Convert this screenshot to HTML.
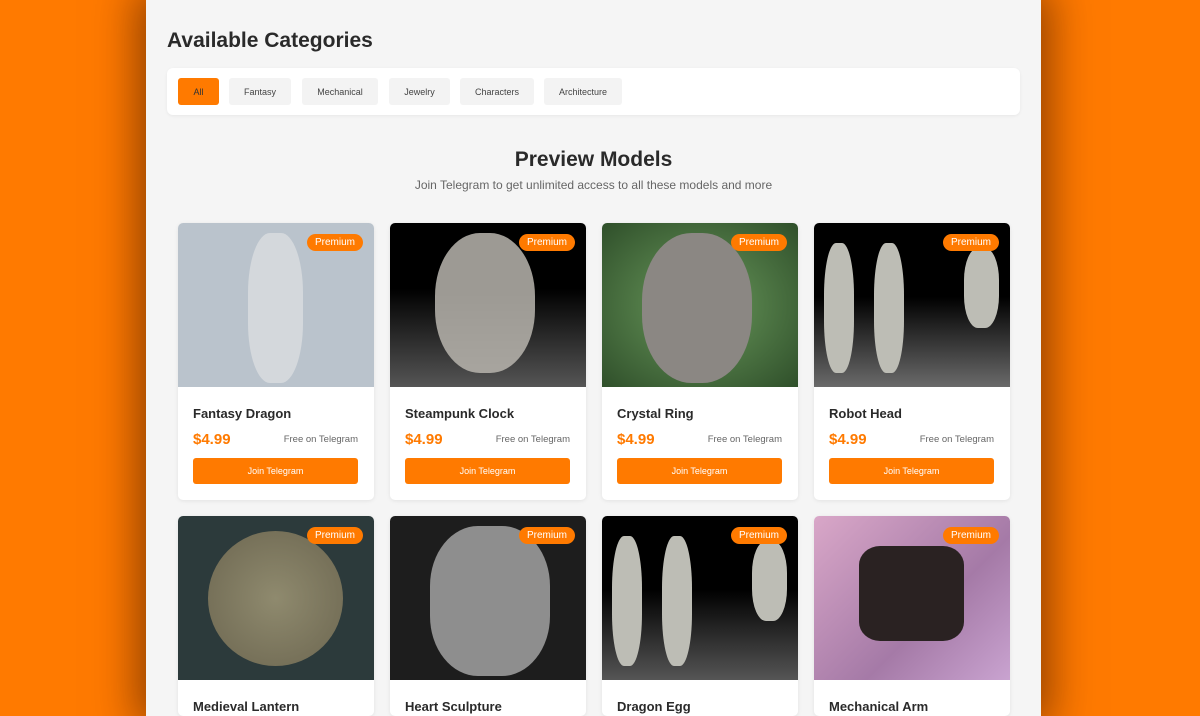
<!DOCTYPE html>
<html><head><meta charset="utf-8"><style>
*{margin:0;padding:0;box-sizing:border-box}
body{width:1200px;height:716px;overflow:hidden;background:#ff7a00;font-family:"Liberation Sans",sans-serif;position:relative}
.panel{position:absolute;left:146px;top:0;width:895px;height:716px;background:#f5f5f5;box-shadow:0 0 40px 10px rgba(60,20,0,.55);overflow:hidden}
h1{position:absolute;left:21px;top:29px;font-size:21px;font-weight:700;color:#2a2a2a}
.bar{position:absolute;left:21px;top:68px;width:853px;height:47px;background:#fff;border-radius:6px;box-shadow:0 1px 3px rgba(0,0,0,.06)}
.cat{position:absolute;top:10px;height:27px;background:#f3f3f3;border-radius:3px;font-size:9px;color:#444;display:flex;align-items:center;justify-content:center}
.cat.a{background:#ff7a00;color:#333}
h2{position:absolute;left:0;width:895px;text-align:center;top:148px;font-size:21px;font-weight:700;color:#2a2a2a}
.sub{position:absolute;left:0;width:895px;text-align:center;top:178px;font-size:12px;color:#666}
.card{position:absolute;width:196px;height:277px;background:#fff;border-radius:5px;overflow:hidden;box-shadow:0 1px 4px rgba(0,0,0,.08)}
.card.s{height:200px}
.img{height:164px;position:relative;overflow:hidden}
.badge{position:absolute;right:11px;top:11px;background:#ff7a00;color:#fff;font-size:10px;padding:3px 8px;border-radius:9px}
.t{position:absolute;left:15px;top:183px;font-size:13px;font-weight:700;color:#2a2a2a}
.p{position:absolute;left:15px;top:208px;font-size:15px;font-weight:700;color:#ff7a00}
.f{position:absolute;right:16px;top:211px;font-size:9.5px;color:#666}
.btn{position:absolute;left:15px;top:235px;width:165px;height:26px;background:#ff7a00;border-radius:3px;color:#fff;font-size:9px;display:flex;align-items:center;justify-content:center}
.blob{position:absolute;border-radius:50%}
</style></head><body>
<div class="panel">
<h1>Available Categories</h1>
<div class="bar">
<div class="cat a" style="left:11px;width:41px">All</div>
<div class="cat" style="left:62px;width:62px">Fantasy</div>
<div class="cat" style="left:135px;width:76px">Mechanical</div>
<div class="cat" style="left:222px;width:61px">Jewelry</div>
<div class="cat" style="left:293px;width:74px">Characters</div>
<div class="cat" style="left:377px;width:78px">Architecture</div>
</div>
<h2>Preview Models</h2>
<div class="sub">Join Telegram to get unlimited access to all these models and more</div>

<div class="card" style="left:32px;top:223px"><div class="img" style="background:#bac3cc"><div class="blob" style="left:70px;top:10px;width:55px;height:150px;background:#d4d8dc;border-radius:40%"></div><span class="badge">Premium</span></div><div class="t">Fantasy Dragon</div><div class="p">$4.99</div><div class="f">Free on Telegram</div><div class="btn">Join Telegram</div></div>
<div class="card" style="left:244px;top:223px"><div class="img" style="background:linear-gradient(#000 40%,#555)"><div class="blob" style="left:45px;top:10px;width:100px;height:140px;background:#b8b5ae;opacity:.85;border-radius:45%"></div><span class="badge">Premium</span></div><div class="t">Steampunk Clock</div><div class="p">$4.99</div><div class="f">Free on Telegram</div><div class="btn">Join Telegram</div></div>
<div class="card" style="left:456px;top:223px"><div class="img" style="background:radial-gradient(#6a9a5c,#2f4f2a)"><div class="blob" style="left:40px;top:10px;width:110px;height:150px;background:#8b8783;border-radius:45%"></div><span class="badge">Premium</span></div><div class="t">Crystal Ring</div><div class="p">$4.99</div><div class="f">Free on Telegram</div><div class="btn">Join Telegram</div></div>
<div class="card" style="left:668px;top:223px"><div class="img" style="background:linear-gradient(#000 45%,#6a6a6a)"><div class="blob" style="left:10px;top:20px;width:30px;height:130px;background:#bdbdb5;border-radius:40%"></div><div class="blob" style="left:60px;top:20px;width:30px;height:130px;background:#bdbdb5;border-radius:40%"></div><div class="blob" style="left:150px;top:25px;width:35px;height:80px;background:#bdbdb5;border-radius:40%"></div><span class="badge">Premium</span></div><div class="t">Robot Head</div><div class="p">$4.99</div><div class="f">Free on Telegram</div><div class="btn">Join Telegram</div></div>

<div class="card s" style="left:32px;top:516px"><div class="img" style="background:#2c3a3b"><div class="blob" style="left:30px;top:15px;width:135px;height:135px;background:radial-gradient(#8f8a6e,#6c6650)"></div><span class="badge">Premium</span></div><div class="t">Medieval Lantern</div></div>
<div class="card s" style="left:244px;top:516px"><div class="img" style="background:#1d1d1d"><div class="blob" style="left:40px;top:10px;width:120px;height:150px;background:#8e8e8e;border-radius:40%"></div><span class="badge">Premium</span></div><div class="t">Heart Sculpture</div></div>
<div class="card s" style="left:456px;top:516px"><div class="img" style="background:linear-gradient(#000 45%,#555)"><div class="blob" style="left:10px;top:20px;width:30px;height:130px;background:#bdbdb5;border-radius:40%"></div><div class="blob" style="left:60px;top:20px;width:30px;height:130px;background:#bdbdb5;border-radius:40%"></div><div class="blob" style="left:150px;top:25px;width:35px;height:80px;background:#bdbdb5;border-radius:40%"></div><span class="badge">Premium</span></div><div class="t">Dragon Egg</div></div>
<div class="card s" style="left:668px;top:516px"><div class="img" style="background:linear-gradient(135deg,#d9a7c8,#a57aa7 60%,#c9a3d0)"><div class="blob" style="left:45px;top:30px;width:105px;height:95px;background:#2a2222;border-radius:20%"></div><span class="badge">Premium</span></div><div class="t">Mechanical Arm</div></div>
</div>
</body></html>
